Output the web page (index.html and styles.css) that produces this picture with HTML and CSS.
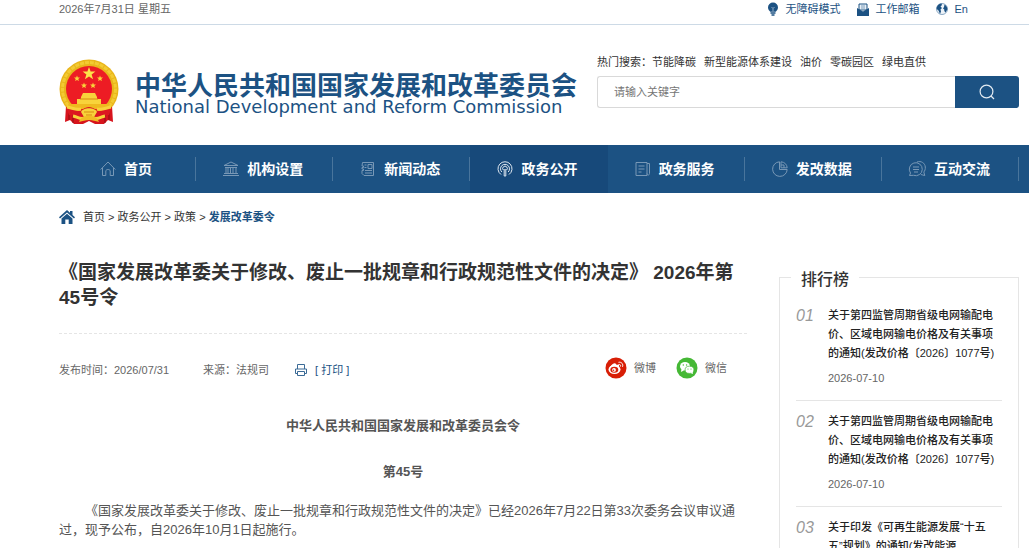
FILE: index.html
```html
<!DOCTYPE html>
<html lang="zh-CN">
<head>
<meta charset="utf-8">
<meta name="viewport" content="width=device-width, initial-scale=1">
<title>国家发展改革委令</title>
<link rel="stylesheet" href="styles.css">
</head>
<body>
<div class="topbar wrap">
  <span class="today">2026年7月31日 星期五</span>
  <div class="tools">
    <a href="#"><svg width="12" height="14" viewBox="0 0 12 14"><path d="M6 .5a5 5 0 0 0-5 5c0 2 1.200 3 2.200 4.300h5.600C9.800 8.500 11 7.500 11 5.500a5 5 0 0 0-5-5z" fill="#1c5283"/><path d="M6 9.500V6.500L4.500 5M6 6.500 7.500 5" stroke="#8fabc5" fill="none"/><path d="M3.500 11h5M4.500 13h3" stroke="#1c5283" stroke-width="1.500"/></svg>无障碍模式</a>
    <a href="#"><svg width="12" height="13" viewBox="0 0 12 13"><path d="M2 1h8v6H2z" fill="#e9f0f6" stroke="#1c5283"/><path d="M4 3h4M4 5h4" stroke="#7f9fbd"/><path d="M0 5 6 8.500 12 5V13H0z" fill="#1c5283"/></svg>工作邮箱</a>
    <a href="#"><svg width="12" height="12" viewBox="0 0 12 12"><circle cx="6" cy="6" r="5.500" fill="#eef3f8" stroke="#8aa8c4"/><path d="M.7 4.500C1.500 2 3.500.7 5.500.6L6 2 4.500 3.500 6 5 4.500 6.500 5 8.500 4 11 2.500 7.500.7 6zM8.500 1.500c2 1 3 3 2.800 5L9.500 9.500 8.300 8V6.500L7 5.500 8 4z" fill="#1c5283"/></svg>En</a>
  </div>
</div>
<header class="header wrap">
  <a class="brand" href="#">
    <svg class="emblem" width="60" height="66" viewBox="0 0 60 66" role="img" aria-label="国徽">
      <path d="M7 47 6 63l5-2 4 4h9l6-3 6 3h9l4-4 5 2-1-16z" fill="#d7141d"/>
      <path d="M10 53v8M14 55v9M46 55v9M50 53v8" stroke="#8f0d13" fill="none"/>
      <circle cx="30" cy="30" r="29.500" fill="#e9b51b"/>
      <circle cx="30" cy="30" r="26.500" fill="none" stroke="#f3cb32" stroke-width="3" stroke-dasharray="4 1"/>
      <circle cx="30" cy="30" r="23" fill="#ed1c24"/>
      <path d="m30 8 1.600 4.500h4.800l-3.800 2.900 1.500 4.800L30 17.400l-4.100 2.800 1.500-4.800-3.800-2.900h4.800z" fill="#fce34a"/>
      <path id="star" d="m18 16.500.8 2 2.200.1-1.700 1.400.6 2.100-1.900-1.100-1.900 1.100.6-2.100-1.700-1.400 2.200-.1z" fill="#f9d33a"/>
      <use href="#star" x="23"/><use href="#star" x="7" y="7"/><use href="#star" x="16" y="7"/>
      <path d="m22 38 2-4h12l2 4v2h4v5H18v-5h4z" fill="#f8d33b"/>
      <path d="M21 40h18" stroke="#d78b13"/>
      <path d="M9 45h42l-2 5H11z" fill="#efb91f"/>
      <path d="M7 48c6 0 8 3 12 4 4 0 6-4 11-4s7 4 11 4c4-1 6-4 12-4l-3 8c-5 0-8 3-12 5-4-1-5-2-8-2s-4 1-8 2c-4-2-7-5-12-5z" fill="#dc1820"/>
      <path d="M8 48c6 1 8 3 14 2M52 48c-6 1-8 3-14 2M14 57c5 1 7 4 12 2M46 57c-5 1-7 4-12 2" fill="none" stroke="#f8d33b" stroke-width="3"/>
      <path d="M22 53c2-5 14-5 16 0l-3 5H25z" fill="#f8d33b"/>
      <path d="M25 53h10M27 56h6" stroke="#d78b13"/>
      <path d="M20 63c2-5 5-6 10-6s8 1 10 6c-4-1-6-2-10-2s-6 1-10 2z" fill="#f1bd24"/>
    </svg>
    <span class="names"><span class="name-zh">中华人民共和国国家发展和改革委员会</span><span class="name-en" lang="en">National Development and Reform Commission</span></span>
  </a>
  <div class="search">
    <div class="hot"><span>热门搜索：</span><a href="#">节能降碳</a><a href="#">新型能源体系建设</a><a href="#">油价</a><a href="#">零碳园区</a><a href="#">绿电直供</a></div>
    <form class="search-form">
      <input type="text" placeholder="请输入关键字" aria-label="请输入关键字">
      <button type="button" aria-label="搜索"><svg width="16" height="16" viewBox="0 0 16 16" fill="none" stroke="#e3ebf2" stroke-width="1.200"><circle cx="7.500" cy="7.500" r="6.400"/><path d="m12 12 3 3"/></svg></button>
    </form>
  </div>
</header>
<nav class="nav">
  <div class="nav-row">
    <a href="#"><svg width="16" height="16" viewBox="0 0 16 16"><path d="M.7 8.500 8 1l7.300 7.500M2.500 7v7.500h3.300V10c0-2 4.400-2 4.400 0v4.500h3.300V7"/></svg>首页</a>
    <a href="#"><svg width="16" height="16" viewBox="0 0 16 16"><path d="M1 4.500 8 1l7 3.500zM2 6.500h12M1 12.500h14M0 14.500h16M3 6.500v6M5 6.500v6M7.500 6.500v6M10 6.500v6M13 6.500v6"/></svg>机构设置</a>
    <a href="#"><svg width="16" height="16" viewBox="0 0 16 16"><path d="M2.500 1.500h11v13H4l-2-2v-3h1.500V8H2V6.500h1.500V5H2zM8 3.500h4v4H8zM4.500 4h2M4.500 6.500h2M5 9.500h7M5 12h7"/></svg>新闻动态</a>
    <a href="#" class="current" aria-current="page"><svg width="16" height="16" viewBox="0 0 16 16"><path d="M4 13.500a7 7 0 1 1 8 0M4.800 11a4.500 4.500 0 1 1 6.400 0M6.300 9a2.300 2.300 0 1 1 3.400 0M7.200 8v7h1.600V8"/></svg>政务公开</a>
    <a href="#"><svg width="16" height="16" viewBox="0 0 16 16"><path d="M1 1.500h11v13H1zM12 2.500h2.500v10c0 2-2.500 2-2.500 0M3.500 5h6M3.500 8h6M3.500 11h3"/></svg>政务服务</a>
    <a href="#"><svg width="16" height="16" viewBox="0 0 16 16"><path d="M7.500.8a7.300 7.300 0 1 0 7.700 7.700H7.500zM9 .8v6h6.200C15 3.500 12.500 1 9 .8zM9 4h3v3"/></svg>发改数据</a>
    <a href="#"><svg width="18" height="16" viewBox="0 0 18 16"><path d="M1.500 14.500 2.500 12a6.500 6.500 0 1 1 3 2.300zM9 1c4-1.500 8 1 8.300 5 .2 2-.5 4-1.500 5l1 3.500-4-1M5 6h6M5 8.500h6M6 11h4"/></svg>互动交流</a>
  </div>
</nav>
<div class="wrap">
  <div class="crumbs"><svg width="16" height="14" viewBox="0 0 16 14"><path d="M0 7.200 8 0l3 2.700V1h2.500v4L16 7.200 15 8.500 8 2.400 1 8.500z" fill="#1c5283"/><path d="M2.500 8.500 8 3.700l5.500 4.800V14H9.700V9.500H6.300V14H2.500z" fill="#1c5283"/></svg><a href="#">首页</a> &gt; <a href="#">政务公开</a> &gt; <a href="#">政策</a> &gt; <a class="here" href="#">发展改革委令</a></div>
  <div class="columns">
    <main class="article">
      <h1>《国家发展改革委关于修改、废止一批规章和行政规范性文件的决定》 2026年第45号令</h1>
      <div class="meta">
        <div class="facts">
          <span>发布时间：2026/07/31</span>
          <span>来源：法规司</span>
          <a class="print" href="#"><svg width="12" height="12" viewBox="0 0 12 12" fill="none" stroke="#3a6a96"><path d="M2.500 5V.5h7V5M2.500 9.500h-2V5h11v4.500h-2M2.500 7.500h7v4h-7z"/></svg>[ 打印 ]</a>
        </div>
        <div class="share">
          <a href="#"><svg width="22" height="22" viewBox="0 0 22 22"><circle cx="11" cy="11" r="10.500" fill="#d81e06"/><ellipse cx="9.500" cy="12.500" rx="6" ry="4.500" fill="#fff"/><path d="M5 10c2-3 5-5 6-3s4-1 3 3z" fill="#fff"/><ellipse cx="9.300" cy="12.700" rx="4" ry="3" fill="#d81e06"/><circle cx="9" cy="12.900" r="1.900" fill="#fff"/><circle cx="8.500" cy="13.200" r=".8" fill="#d81e06"/><path d="M13.500 5.300c3-.6 5 1.700 4 4.500M13.500 7.500c1.500-.3 2.500.6 2 2" fill="none" stroke="#fff"/></svg>微博</a>
          <a href="#"><svg width="22" height="22" viewBox="0 0 22 22"><circle cx="11" cy="11" r="10.500" fill="#45b835"/><ellipse cx="9" cy="9.300" rx="5" ry="4.300" fill="#fff"/><path d="m5.500 12-.6 3 3-1.500z" fill="#fff"/><ellipse cx="13.500" cy="12.800" rx="4.400" ry="3.600" fill="#fff" stroke="#45b835" stroke-width=".7"/><path d="m14.500 16 2.500 1-.4-2.500z" fill="#fff"/><g fill="#45b835"><circle cx="7.300" cy="8" r=".7"/><circle cx="10.600" cy="8" r=".7"/><circle cx="12" cy="12" r=".6"/><circle cx="15" cy="12" r=".6"/></g></svg>微信</a>
        </div>
      </div>
      <div class="content">
        <p class="center">中华人民共和国国家发展和改革委员会令</p>
        <p class="center">第45号</p>
        <p class="para">《国家发展改革委关于修改、废止一批规章和行政规范性文件的决定》已经2026年7月22日第33次委务会议审议通过，现予公布，自2026年10月1日起施行。</p>
      </div>
    </main>
    <aside class="rank">
      <h2>排行榜</h2>
      <ol>
        <li><i>01</i><div><a href="#">关于第四监管周期省级电网输配电价、区域电网输电价格及有关事项的通知(发改价格〔2026〕1077号)</a><time>2026-07-10</time></div></li>
        <li><i>02</i><div><a href="#">关于第四监管周期省级电网输配电价、区域电网输电价格及有关事项的通知(发改价格〔2026〕1077号)</a><time>2026-07-10</time></div></li>
        <li><i>03</i><div><a href="#">关于印发《可再生能源发展“十五五”规划》的通知(发改能源</a></div></li>
      </ol>
    </aside>
  </div>
</div>
</body>
</html>
```
FILE: styles.css
```css
* { box-sizing: border-box; }
body {
  margin: 0;
  background: #fff;
  color: #333;
  font: 11px/18px "Liberation Sans", "Noto Sans CJK SC", sans-serif;
}
a { color: inherit; text-decoration: none; }
svg { flex: none; }
h1, h2, p, ol { margin: 0; padding: 0; }
.wrap { padding-left: 59px; padding-right: 10px; }

.topbar {
  display: flex;
  justify-content: space-between;
  padding-bottom: 6px;
  border-bottom: 1px solid #cddae6;
  color: #666;
}
.tools { display: flex; gap: 16px; padding-right: 51px; color: #1c5283; }
.tools a { display: flex; align-items: center; gap: 7px; }

.header {
  display: flex;
  justify-content: space-between;
  padding-top: 28px;
  padding-bottom: 20px;
}
.brand { display: flex; gap: 16px; padding-top: 6px; color: #1c5283; }
.names { display: flex; flex-direction: column; padding-top: 14px; white-space: nowrap; }
.name-zh { font-size: 26px; line-height: 26px; font-weight: 700; }
.name-en { font: 18px/16px "DejaVu Sans", sans-serif; }
.search { width: 422px; flex: none; }
.hot { display: flex; gap: 8px; padding-bottom: 5px; }
.hot span { margin-right: -8px; }
.search-form { display: flex; height: 32px; }
.search-form input {
  flex: 1;
  min-width: 0;
  padding: 0 16px;
  border: 1px solid #d9d9d9;
  border-right: 0;
  border-radius: 3px 0 0 3px;
  font: inherit;
  outline: 0;
}
.search-form input::placeholder { color: #757575; }
.search-form button {
  display: grid;
  place-items: center;
  width: 64px;
  padding: 0;
  border: 0;
  border-radius: 0 3px 3px 0;
  background: #1c5283;
}

.nav { background: #1c5283; padding-left: 59px; padding-right: 10px; }
.nav-row { display: grid; grid-template-columns: repeat(7, 1fr); }
.nav a {
  display: flex;
  align-items: center;
  justify-content: center;
  gap: 8px;
  height: 48px;
  padding-right: 3px;
  color: #fff;
  font-size: 14px;
  font-weight: 700;
  background: linear-gradient(#49759c, #49759c) right center / 1px 24px no-repeat;
}
.nav a.current { background: #17497a; }
.nav svg { fill: none; stroke: #7898b6; }
.nav .current svg { stroke: #dfe8f0; }

.crumbs { padding: 15px 0; line-height: 18px; }
.crumbs svg { margin-right: 8px; vertical-align: -3px; }
.crumbs .here { color: #1c5283; font-weight: 700; }

.columns { display: grid; grid-template-columns: minmax(0, 1fr) 240px; gap: 32px; }
.article { padding-top: 19px; }
h1 {
  padding-bottom: 23px;
  border-bottom: 1px dashed #e5e5e5;
  font-size: 19px;
  line-height: 25px;
}
.meta { display: flex; align-items: center; padding: 23px 20px 0 0; color: #666; }
.facts { display: flex; gap: 34px; padding-top: 4px; }
.print { display: flex; align-items: center; gap: 8px; margin-left: -8px; color: #1c5283; }
.share { display: flex; gap: 20px; margin-left: auto; }
.share a { display: flex; align-items: center; gap: 7px; }
.content { padding-top: 37px; color: #555; font-size: 13px; line-height: 19px; }
.center { margin-bottom: 27px; text-align: center; font-weight: 700; }
.para { text-indent: 26px; margin-top: -7px; }

.rank { margin-top: 36px; padding: 0 16px; border: 1px solid #e5e5e5; border-bottom: 0; }
.rank h2 {
  width: max-content;
  margin: -10px 0 0 -5px;
  padding: 0 10px;
  background: #fff;
  font-size: 16px;
  line-height: 24px;
  font-weight: 500;
}
.rank ol { list-style: none; }
.rank li { display: flex; padding: 11px 0 12px; border-bottom: 1px solid #e5e5e5; line-height: 19px; }
.rank li:first-child { padding-top: 14px; }
.rank i { width: 32px; flex: none; color: #999; font-size: 16px; }
.rank li div { min-width: 0; padding-right: 4px; }
.rank li a { display: block; font-weight: 500; color: #222; }
.rank time { display: block; margin-top: 6px; color: #666; }
```
